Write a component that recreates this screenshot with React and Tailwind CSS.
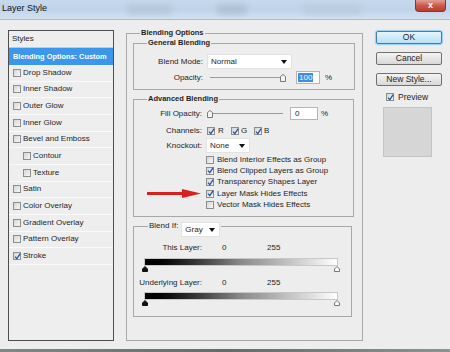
import React from 'react'

const font = { fontFamily: '"Liberation Sans", Arial, sans-serif' }

function Check({ checked }) {
  return (
    <span className="w-[8px] h-[8px] border border-[#8d8d8d] bg-gradient-to-br from-[#d6d6d6] to-[#f7f7f7] flex items-center justify-center shrink-0">
      {checked && (
        <svg width="7" height="7" viewBox="0 0 7 7" className="shrink-0">
          <path d="M1 3.6 L2.8 5.6 L6.2 0.6" fill="none" stroke="#2256a8" strokeWidth="1.3" />
        </svg>
      )}
    </span>
  )
}

function Dropdown({ value, className }) {
  return (
    <div className={`bg-white border border-[#e2e2e2] flex items-center justify-between pl-[3px] pr-[4px] ${className}`}>
      <span>{value}</span>
      <svg width="6" height="4" viewBox="0 0 6 4"><path d="M0 0 H6 L3 4 Z" fill="#111" /></svg>
    </div>
  )
}

function Thumb() {
  return (
    <svg width="6" height="8" viewBox="0 0 6 8" className="shrink-0">
      <path d="M0.5 7.5 V2.5 L3 0.5 L5.5 2.5 V7.5 Z" fill="#f4f4f4" stroke="#7a7a7a" strokeWidth="1" />
    </svg>
  )
}

function Marker({ dark }) {
  return (
    <svg width="6" height="6" viewBox="0 0 6 6">
      <path d="M0.5 5.5 V3 L3 0.5 L5.5 3 V5.5 Z" fill={dark ? '#111' : '#fafafa'} stroke={dark ? '#111' : '#777'} strokeWidth="1" />
    </svg>
  )
}

const styleRows = [
  ['Drop Shadow', false, false],
  ['Inner Shadow', false, false],
  ['Outer Glow', false, false],
  ['Inner Glow', false, false],
  ['Bevel and Emboss', false, false],
  ['Contour', false, true],
  ['Texture', false, true],
  ['Satin', false, false],
  ['Color Overlay', false, false],
  ['Gradient Overlay', false, false],
  ['Pattern Overlay', false, false],
  ['Stroke', true, false],
]

const advancedChecks = [
  ['Blend Interior Effects as Group', false],
  ['Blend Clipped Layers as Group', true],
  ['Transparency Shapes Layer', true],
  ['Layer Mask Hides Effects', true],
  ['Vector Mask Hides Effects', false],
]

export default function App() {
  return (
    <div className="w-[450px] h-[352px] overflow-hidden flex flex-col text-[8px] text-[#1e1e1e] bg-[#ededed]" style={font}>
      {/* Title bar */}
      <div className="h-[20px] flex items-start border-b border-[#a9bdd1] bg-gradient-to-b from-[#c6d9ed] via-[#bfd4ea] to-[#d3e2f1]">
        <span className="pl-[2px] pt-[3px] text-[9px] leading-[10px] text-[#111]">Layer Style</span>
        <div className="ml-[80px] mt-[5px] w-[45px] h-[9px] rounded-[3px] bg-[#b4c7db] blur-[3px]" />
        <div className="ml-[45px] mt-[5px] w-[30px] h-[9px] rounded-[3px] bg-[#adbfd3] blur-[3px]" />
        <div className="ml-[55px] mt-[5px] w-[60px] h-[9px] rounded-[3px] bg-[#b9cbde] blur-[3px]" />
        <div className="ml-auto mr-[4px] w-[31px] h-[12px] rounded-b-[4px] border border-t-0 border-[#7a3a35] bg-gradient-to-b from-[#e0a096] via-[#c95a4c] to-[#c0392b] flex items-center justify-center text-white text-[9px] font-bold leading-none">
          x
        </div>
      </div>

      {/* Body */}
      <div className="flex-1 flex pl-[8px]">
        {/* Styles list */}
        <div className="mt-[10px] w-[106px] h-[311px] border border-[#4e4e4e] bg-[#eeeeee] flex flex-col">
          <div className="h-[17px] shrink-0 flex items-center pl-[3px] border-b border-[#c9c9c9]">Styles</div>
          <div className="h-[17px] shrink-0 flex items-center pl-[4px] bg-[#3a97ea] text-white font-bold text-[7.4px] whitespace-nowrap overflow-hidden">
            Blending Options: Custom
          </div>
          {styleRows.map(([label, checked, indent]) => (
            <div
              key={label}
              className={`h-[16.67px] shrink-0 flex items-center gap-[2px] border-b border-[#fafafa] ${indent ? 'pl-[14px]' : 'pl-[4px]'}`}
            >
              <Check checked={checked} />
              <span>{label}</span>
            </div>
          ))}
        </div>

        {/* Blending Options */}
        <fieldset className="ml-[12px] mt-[8px] w-[237px] h-[313px] border border-[#a8a8a8] px-[6px]">
          <legend className="ml-[7px] px-[1px] font-bold text-[7.5px] leading-[10px]">Blending Options</legend>

          <fieldset className="w-[222px] h-[52px] border border-[#a8a8a8]">
            <legend className="ml-[13px] px-[1px] font-bold text-[7.5px] leading-[10px]">General Blending</legend>
            <div className="mt-[6px] h-[15px] flex items-center">
              <span className="w-[69px] text-right">Blend Mode:</span>
              <Dropdown value="Normal" className="ml-[4px] w-[85px] h-[15px]" />
            </div>
            <div className="mt-[2px] h-[13px] flex items-center">
              <span className="w-[69px] text-right">Opacity:</span>
              <div className="ml-[7px] w-[76px] flex items-center">
                <div className="flex-1 h-[1px] bg-[#9a9a9a]" />
                <Thumb />
              </div>
              <div className="ml-[10px] w-[24px] h-[13px] bg-white border border-[#b5b5b5] flex items-center pl-[1px]">
                <span className="bg-[#3a8ee6] text-white px-[1px] leading-[9px]">100</span>
              </div>
              <span className="ml-[5px]">%</span>
            </div>
          </fieldset>

          <fieldset className="mt-[4px] w-[221px] h-[123px] border border-[#a8a8a8]">
            <legend className="ml-[13px] px-[1px] font-bold text-[7.5px] leading-[10px]">Advanced Blending</legend>
            <div className="mt-[3px] h-[13px] flex items-center">
              <span className="w-[68px] text-right">Fill Opacity:</span>
              <div className="ml-[5px] w-[76px] flex items-center">
                <Thumb />
                <div className="flex-1 h-[1px] bg-[#9a9a9a]" />
              </div>
              <div className="ml-[7px] w-[28px] h-[13px] bg-white border border-[#b5b5b5] flex items-center pl-[4px]">0</div>
              <span className="ml-[3px]">%</span>
            </div>
            <div className="mt-[5px] h-[12px] flex items-center">
              <span className="w-[68px] text-right">Channels:</span>
              <div className="ml-[5px] w-[24px] flex items-center gap-[3px]"><Check checked /><span>R</span></div>
              <div className="w-[23px] flex items-center gap-[2px]"><Check checked /><span>G</span></div>
              <div className="flex items-center gap-[2px]"><Check checked /><span>B</span></div>
            </div>
            <div className="mt-[1px] h-[15px] flex items-center">
              <span className="w-[68px] text-right">Knockout:</span>
              <Dropdown value="None" className="ml-[4px] w-[44px] h-[15px]" />
            </div>
            <div className="mt-[1px] flex flex-col">
              {advancedChecks.map(([label, checked]) => (
                <div key={label} className="h-[11.3px] flex items-center">
                  <div className="w-[72px] flex items-center">
                    {label === 'Layer Mask Hides Effects' && (
                      <svg width="54" height="9" viewBox="0 0 54 9" className="ml-[13px]">
                        <rect x="0" y="3" width="37" height="3" fill="#d9201c" />
                        <path d="M35 0 L54 4.5 L35 9 Z" fill="#d9201c" />
                      </svg>
                    )}
                  </div>
                  <Check checked={checked} />
                  <span className="ml-[3px]">{label}</span>
                </div>
              ))}
            </div>
          </fieldset>

          <fieldset className="mt-[4px] w-[219px] h-[96px] border border-[#a8a8a8]">
            <legend className="ml-[14px] px-[1px] flex items-start leading-[10px]">
              <span>Blend If:</span>
              <Dropdown value="Gray" className="ml-[3px] mt-[1px] mb-[-6px] w-[39px] h-[15px]" />
            </legend>
            <div className="mt-[11px] h-[12px] flex items-center">
              <span className="w-[68px] text-right">This Layer:</span>
              <span className="ml-[20px] w-[45px]">0</span>
              <span>255</span>
            </div>
            <div className="mt-[4px] ml-[10px] w-[194px] h-[8px] border border-[#c8c8c8] bg-gradient-to-r from-black via-[#8a8a8a] to-white" />
            <div className="ml-[8px] w-[198px] h-[6px] flex justify-between">
              <Marker dark />
              <Marker />
            </div>
            <div className="mt-[5px] h-[12px] flex items-center">
              <span className="w-[68px] text-right">Underlying Layer:</span>
              <span className="ml-[20px] w-[45px]">0</span>
              <span>255</span>
            </div>
            <div className="mt-[3px] ml-[10px] w-[194px] h-[8px] border border-[#c8c8c8] bg-gradient-to-r from-black via-[#8a8a8a] to-white" />
            <div className="ml-[8px] w-[198px] h-[6px] flex justify-between">
              <Marker dark />
              <Marker />
            </div>
          </fieldset>
        </fieldset>

        {/* Buttons */}
        <div className="ml-[13px] w-[66px] flex flex-col">
          <div className="mt-[11px] h-[13px] rounded-[2px] border border-[#3c7fb1] bg-gradient-to-b from-[#e5f4fc] to-[#b8e0f6] shadow-[0_0_1px_1px_#8fd0f5] flex items-center justify-center text-[8.5px]">OK</div>
          <div className="mt-[8px] h-[13px] rounded-[2px] border border-[#707070] bg-gradient-to-b from-[#f4f4f4] to-[#d8d8d8] flex items-center justify-center text-[8.5px]">Cancel</div>
          <div className="mt-[8px] h-[13px] rounded-[2px] border border-[#707070] bg-gradient-to-b from-[#f4f4f4] to-[#d8d8d8] flex items-center justify-center text-[8.5px]">New Style...</div>
          <div className="mt-[7px] pl-[10px] h-[8px] flex items-center gap-[4px] text-[8.5px]">
            <Check checked />
            <span>Preview</span>
          </div>
          <div className="mt-[6px] ml-[7px] w-[49px] h-[50px] border border-[#c4c4c4] bg-[#d6d6d6]" />
        </div>
      </div>

      <div className="h-[3px] bg-gradient-to-r from-[#7d8a88] via-[#5f6e6c] to-[#8a9694]" />
    </div>
  )
}
